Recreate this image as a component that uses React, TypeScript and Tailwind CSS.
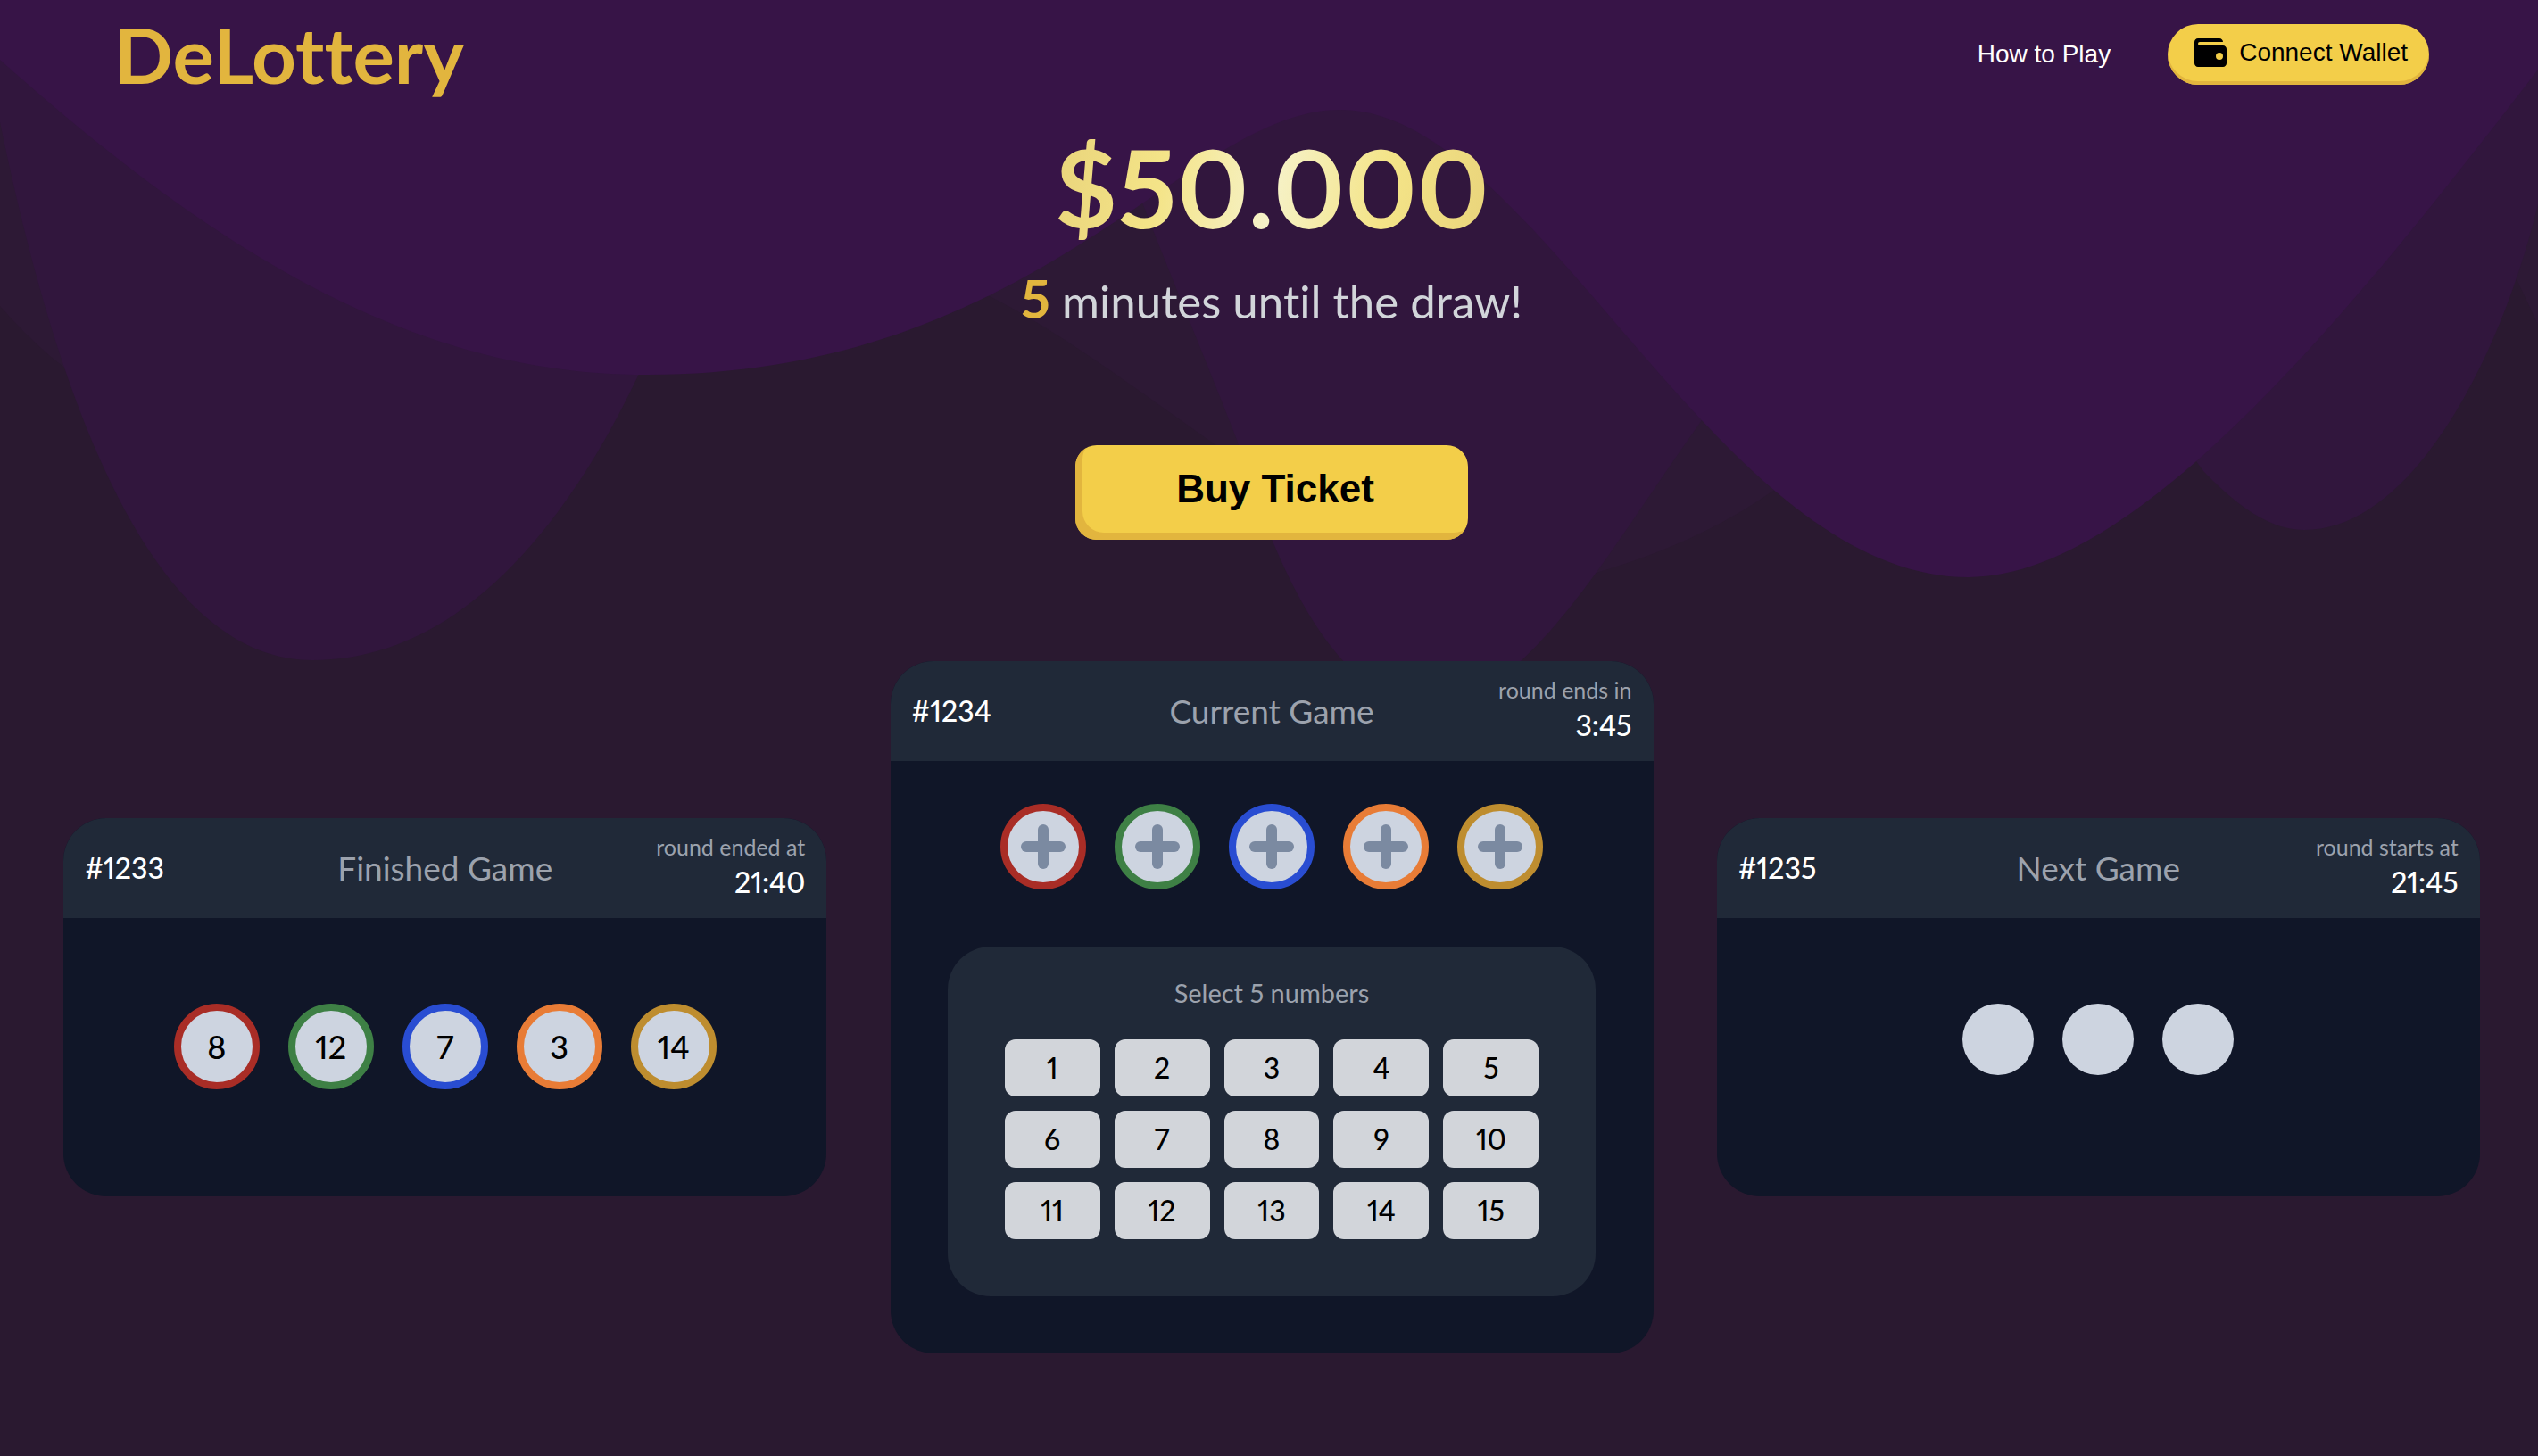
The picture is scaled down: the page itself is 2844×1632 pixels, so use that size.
import React from "react";

type GameCardProps = {
  id: string;
  title: string;
  label: string;
  time: string;
  children: React.ReactNode;
};

const ringColors = [
  "border-[#a92d26]",
  "border-[#3e8045]",
  "border-[#294dd2]",
  "border-[#e87c36]",
  "border-[#be8d2f]",
];

const pickable = Array.from({ length: 15 }, (_, i) => i + 1);

function Waves() {
  return (
    <svg
      className="absolute inset-x-0 top-0 w-full"
      viewBox="0 0 2844 900"
      fill="none"
      aria-hidden="true"
    >
      <path
        fill="#2d1935"
        d="M0 0V343C110 470 250 520 420 500C620 470 900 260 1100 328C1190 370 1290 450 1400 525C1500 610 1640 680 1785 643C1860 622 1930 590 1984 552C2200 420 2350 380 2500 420C2650 440 2760 180 2814 300L2844 364V0Z"
      />
      <path
        fill="#31163d"
        d="M0 0V137C50 380 150 740 350 740C520 740 640 580 716 419C860 190 1000 100 1120 100C1200 100 1250 150 1280 227C1320 330 1350 400 1386 493C1430 640 1500 790 1600 790C1710 790 1800 620 1907 471C2040 300 2330 330 2469 528C2510 570 2545 594 2582 594C2700 594 2800 410 2844 229V0Z"
      />
      <path
        fill="#371447"
        d="M0 0V67C250 290 470 420 725 420C1165 420 1330 123 1502 123C1722 123 1922 647 2206 647C2400 647 2650 330 2844 78V0Z"
      />
    </svg>
  );
}

function WalletIcon() {
  return (
    <svg viewBox="0 0 24 24" className="size-12" fill="currentColor" aria-hidden="true">
      <path
        fillRule="evenodd"
        d="M5 4H17C18.1 4 19 4.9 19 6H6A1 1 0 0 0 6 8H19C20.1 8 21 8.9 21 10V18C21 19.1 20.1 20 19 20H5C3.9 20 3 19.1 3 18V6C3 4.9 3.9 4 5 4ZM17 12A2 2 0 1 0 17 16A2 2 0 1 0 17 12Z"
      />
    </svg>
  );
}

function PlusIcon() {
  return (
    <svg viewBox="0 0 50 50" className="size-[50px]" fill="#7b8aa1" aria-hidden="true">
      <rect x="19" y="0" width="12" height="50" rx="6" />
      <rect x="0" y="19" width="50" height="12" rx="6" />
    </svg>
  );
}

function GameCard({ id, title, label, time, children }: GameCardProps) {
  return (
    <section className="w-[30%] overflow-hidden rounded-[48px] bg-[#101628]">
      <header className="grid h-28 grid-cols-[1fr_auto_1fr] items-center bg-[#202938] px-6">
        <span className="text-[32px] leading-[48px] font-medium text-white">{id}</span>
        <h2 className="text-[37px] leading-[48px] text-[#9ca2ad]">{title}</h2>
        <div className="flex flex-col items-end">
          <span className="text-[25px] leading-8 text-[#9ca2ad]">{label}</span>
          <span className="text-[32px] leading-[48px] font-medium text-white">{time}</span>
        </div>
      </header>
      {children}
    </section>
  );
}

export default function App() {
  return (
    <div className="relative min-h-screen overflow-hidden bg-[#2a1930] font-['Lato',sans-serif] proportional-nums [font-variant-ligatures:none]">
      <Waves />
      <div className="relative w-[calc(100%+6px)]">
        <header className="flex h-[122px] items-center justify-between px-32">
          <a href="#" className="text-[87px] leading-[96px] font-bold text-[#e2b53e]">
            DeLottery
          </a>
          <nav className="flex items-center gap-16 font-['Liberation_Sans',sans-serif] text-[28px] leading-9">
            <a href="#how" className="text-white">
              How to Play
            </a>
            <button
              type="button"
              className="flex h-[68px] items-center gap-2 rounded-full bg-[#f3ce49] px-6 pb-1 text-black shadow-[inset_0_-4px_0_#e2b53e]"
            >
              <WalletIcon />
              Connect Wallet
            </button>
          </nav>
        </header>

        <main>
          <div className="flex flex-col items-center pt-6">
            <h1 className="bg-linear-[100deg,#e9d47b,#f4e488_25%,#f6f2c8_50%,#f4e488_75%,#e9d47b] bg-clip-text text-[121px] leading-[128px] font-bold text-transparent">
              $50.000
            </h1>
            <p className="mt-7 text-[51px] leading-[64px] text-[#d2d5da]">
              <span className="text-[60px] font-bold text-[#e2b53e]">5</span> minutes until the
              draw!
            </p>
            <button
              type="button"
              className="mt-[129px] h-[106px] w-[440px] rounded-3xl bg-[#f3ce49] pb-2 pl-2 font-['Liberation_Sans',sans-serif] text-[44px] font-bold text-black shadow-[inset_8px_-8px_0_#e2b53e]"
            >
              Buy Ticket
            </button>
          </div>

          <div className="mt-[136px] flex items-center justify-evenly">
            <GameCard id="#1233" title="Finished Game" label="round ended at" time="21:40">
              <div className="flex h-[312px] items-start justify-center gap-8 pt-24">
                {[8, 12, 7, 3, 14].map((n, i) => (
                  <span
                    key={n}
                    className={`flex size-24 items-center justify-center rounded-full border-8 bg-[#cdd4e0] text-[36px] font-medium text-black ${ringColors[i]}`}
                  >
                    {n}
                  </span>
                ))}
              </div>
            </GameCard>

            <GameCard id="#1234" title="Current Game" label="round ends in" time="3:45">
              <div className="flex flex-col items-center gap-16 pt-12 pb-16">
                <div className="flex gap-8">
                  {ringColors.map((c, i) => (
                    <button
                      key={c}
                      type="button"
                      aria-label={`Pick number ${i + 1}`}
                      className={`flex size-24 items-center justify-center rounded-full border-8 bg-[#cdd4e0] ${c}`}
                    >
                      <PlusIcon />
                    </button>
                  ))}
                </div>
                <div className="w-[85%] rounded-[48px] bg-[#202938] px-16 pt-8 pb-16">
                  <h3 className="text-center text-[29px] leading-10 text-[#9ca2ad]">
                    Select 5 numbers
                  </h3>
                  <div className="mt-8 grid grid-cols-5 gap-4">
                    {pickable.map((n) => (
                      <button
                        key={n}
                        type="button"
                        className="h-16 rounded-xl bg-[#d2d5da] text-[32px] font-medium text-black"
                      >
                        {n}
                      </button>
                    ))}
                  </div>
                </div>
              </div>
            </GameCard>

            <GameCard id="#1235" title="Next Game" label="round starts at" time="21:45">
              <div className="flex h-[312px] items-start justify-center gap-8 pt-24">
                <span className="size-20 rounded-full bg-[#cdd4e0]" />
                <span className="size-20 rounded-full bg-[#cdd4e0]" />
                <span className="size-20 rounded-full bg-[#cdd4e0]" />
              </div>
            </GameCard>
          </div>
        </main>
      </div>
    </div>
  );
}
